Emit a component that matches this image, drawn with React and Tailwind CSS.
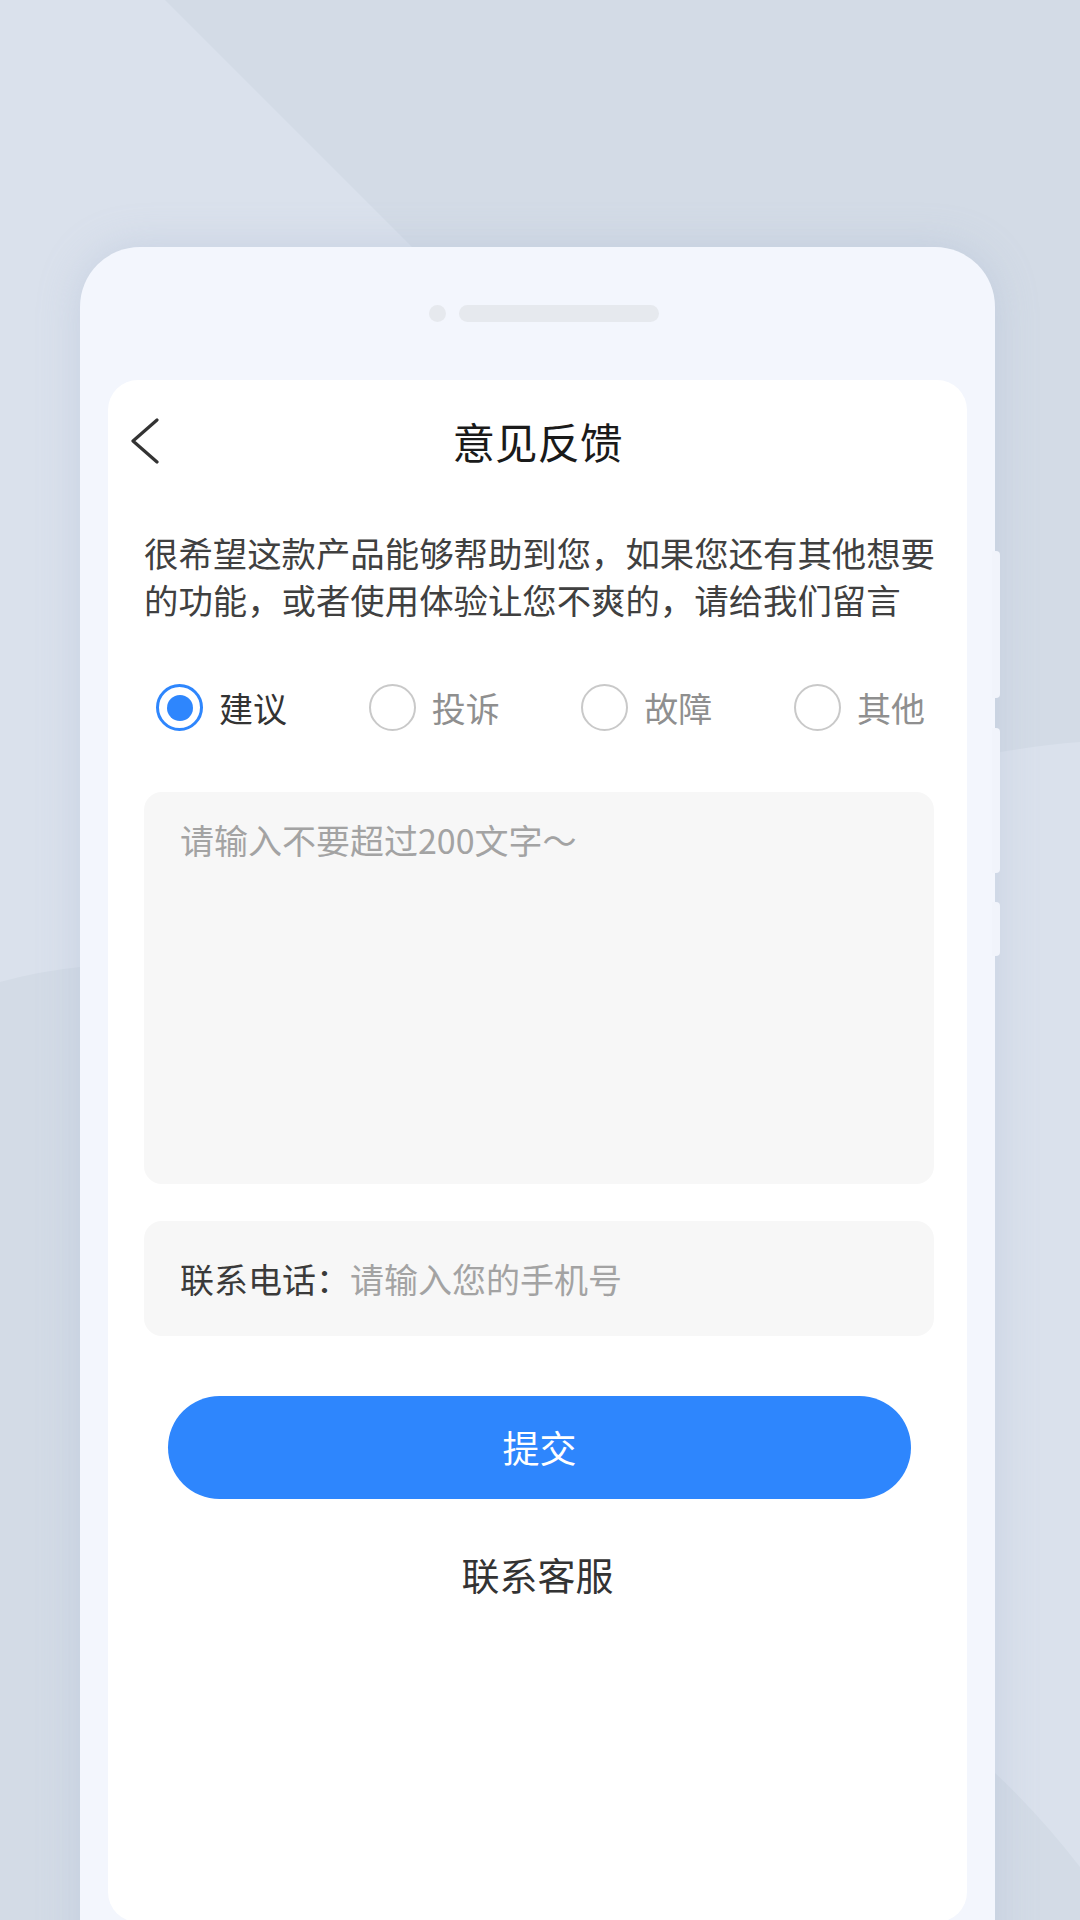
import React, { useState } from 'react';

const OPTIONS = ['建议', '投诉', '故障', '其他'];

// decorative backdrop behind the phone mockup
const Backdrop = () => (
    <svg className="absolute inset-0" width="1080" height="1920" viewBox="0 0 1080 1920">
        <rect width="1080" height="1920" fill="#d3dbe6" />
        <path
            d="M0 0 L165 0 L420 255 L995 753 Q1040 745 1080 742 L1080 1867 Q1040 1815 995 1773 L80 967 Q40 971 0 982 Z"
            fill="#dae1ec"
        />
    </svg>
);

const Radio = ({ label, checked, onSelect }) => (
    <button type="button" onClick={onSelect} className="flex items-center gap-[16px]">
        <span
            className={
                checked
                    ? 'flex items-center justify-center w-[47px] h-[47px] rounded-full border-[3px] border-[#2e86fd]'
                    : 'flex items-center justify-center w-[47px] h-[47px] rounded-full border-2 border-[#c9c9c9]'
            }
        >
            {checked && <span className="w-[26px] h-[26px] rounded-full bg-[#2e86fd]" />}
        </span>
        <span className={checked ? 'text-[34px] leading-[47px] text-[#333333]' : 'text-[34px] leading-[47px] text-[#8f8f8f]'}>
            {label}
        </span>
    </button>
);

const App = () => {
    const [type, setType] = useState('建议');
    const [content, setContent] = useState('');
    const [phone, setPhone] = useState('');

    return (
        <div className="relative w-[1080px] h-[1920px] overflow-hidden font-['Noto_Sans_CJK_SC','Noto_Sans',sans-serif]">
            <Backdrop />

            <div className="relative pt-[247px] pl-[80px]">
                {/* phone body */}
                <div className="relative w-[915px] h-[1760px] rounded-[60px] bg-[#f3f6fd] shadow-[0_0_40px_rgba(160,178,205,0.35)]">
                    {/* side keys */}
                    <span className="absolute -right-[5px] top-[304px] w-[8px] h-[147px] rounded-r-[4px] bg-[#f1f4fb]" />
                    <span className="absolute -right-[5px] top-[481px] w-[8px] h-[145px] rounded-r-[4px] bg-[#f1f4fb]" />
                    <span className="absolute -right-[5px] top-[655px] w-[8px] h-[54px] rounded-r-[4px] bg-[#f1f4fb]" />

                    {/* earpiece */}
                    <div className="flex justify-center items-center gap-[13px] pt-[58px] pl-[13px]">
                        <span className="w-[17px] h-[17px] rounded-full bg-[#e6e9ee]" />
                        <span className="w-[200px] h-[17px] rounded-full bg-[#e6e9ee]" />
                    </div>

                    {/* screen */}
                    <div className="mx-[28px] mt-[58px] h-[1542px] rounded-[30px] bg-white">
                        <div className="grid grid-cols-[100px_1fr_100px] items-center h-[122px]">
                            <button type="button" className="pl-[22px] flex items-center">
                                <svg width="30" height="46" viewBox="0 0 30 46" fill="none">
                                    <path d="M27 2 L3 23 L27 44" stroke="#333333" strokeWidth="3.2" strokeLinecap="round" strokeLinejoin="round" />
                                </svg>
                            </button>
                            <h1 className="text-center text-[42.5px] leading-[56px] text-[#1a1a1a]">意见反馈</h1>
                            <span />
                        </div>

                        <p className="mt-[27px] ml-[36px] w-[796px] text-[34.4px] leading-[47px] text-[#404040]">
                            很希望这款产品能够帮助到您，如果您还有其他想要的功能，或者使用体验让您不爽的，请给我们留言
                        </p>

                        <div className="mt-[61px] flex justify-between pl-[48px] pr-[42px]">
                            {OPTIONS.map(opt => (
                                <Radio key={opt} label={opt} checked={type === opt} onSelect={() => setType(opt)} />
                            ))}
                        </div>

                        <textarea
                            value={content}
                            onChange={e => setContent(e.target.value)}
                            maxLength={200}
                            placeholder="请输入不要超过200文字～"
                            className="block mt-[61px] mx-[36px] w-[790px] h-[392px] resize-none rounded-[18px] bg-[#f7f7f7] px-[36px] pt-[24px] text-[34px] leading-[48px] text-[#333333] placeholder:text-[#a3a3a3] outline-none"
                        />

                        <div className="mt-[37px] mx-[36px] w-[790px] h-[115px] rounded-[18px] bg-[#f7f7f7] flex items-center pl-[36px] text-[34px]">
                            <span className="text-[#3a3a3a] whitespace-nowrap">联系电话：</span>
                            <input
                                value={phone}
                                onChange={e => setPhone(e.target.value)}
                                placeholder="请输入您的手机号"
                                className="flex-1 bg-transparent outline-none text-[#333333] placeholder:text-[#a3a3a3]"
                            />
                        </div>

                        <button
                            type="button"
                            className="block mt-[60px] mx-[60px] w-[743px] h-[103px] rounded-full bg-[#2e86fd] text-white text-[37px]"
                        >
                            提交
                        </button>

                        <div className="mt-[48px] text-center text-[38px] leading-[54px] text-[#333333]">联系客服</div>
                    </div>
                </div>
            </div>
        </div>
    );
};

export default App;
